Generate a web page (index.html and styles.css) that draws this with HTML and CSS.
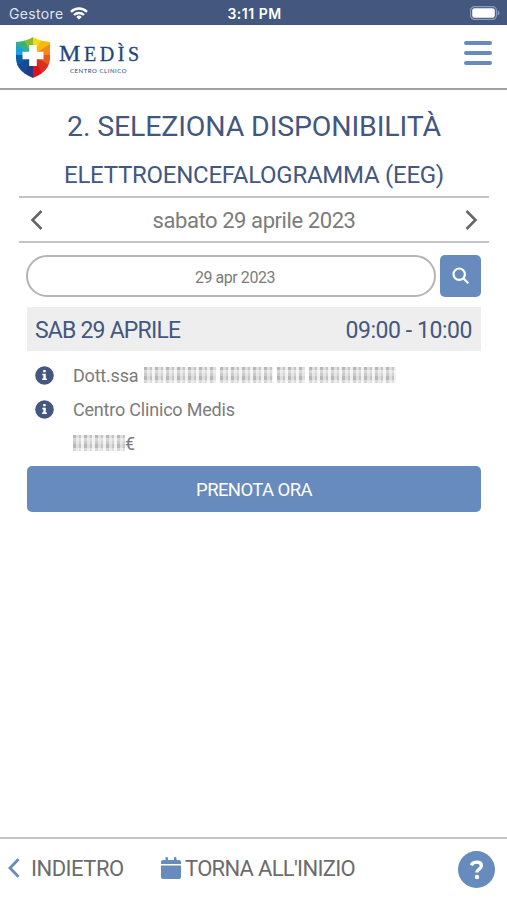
FILE: index.html
```html
<!DOCTYPE html>
<html lang="it">
<head>
    <meta charset="UTF-8">
    <meta name="viewport" content="width=device-width, initial-scale=1.0">
    <title>Medìs - Seleziona disponibilità</title>
    <link rel="stylesheet" href="styles.css">
</head>
<body>
    <div class="status-bar">
        <div class="carrier">
            <span>Gestore</span>
            <svg width="18" height="13" viewBox="0 0 18 13" fill="none" stroke="#fff" stroke-width="2.4">
                <path d="M1 4.8a11.4 11.4 0 0 1 16 0M4 8a7.2 7.2 0 0 1 10 0"/>
                <path d="M9 12.6L6.3 9.9a3.9 3.9 0 0 1 5.4 0z" fill="#fff" stroke="none"/>
            </svg>
        </div>
        <div class="clock">3:11 PM</div>
        <svg class="battery" width="30" height="14" viewBox="0 0 30 14">
            <rect x=".6" y=".6" width="25.8" height="12.8" rx="4" fill="none" stroke="#8d9abb" stroke-width="1.2"/>
            <rect x="2.2" y="2.2" width="22.6" height="9.6" rx="2.4" fill="#fff"/>
            <path d="M27.6 4.6q2 .8 2 2.4t-2 2.4z" fill="#8d9abb"/>
        </svg>
    </div>

    <header class="header">
        <div class="logo">
            <svg width="34" height="41" viewBox="0 0 34 41">
                <defs>
                    <clipPath id="shield"><path d="M17 0Q24 4.500 34 5V21Q34 34 17 41Q0 34 0 21V5Q10 4.500 17 0Z"/></clipPath>
                </defs>
                <g clip-path="url(#shield)">
                    <path d="M17 18V0H34V4z" fill="#f8d90f"/>
                    <path d="M17 18L27 0H34V10z" fill="#f8b80f"/>
                    <path d="M17 18L34 7V19z" fill="#f18a1b"/>
                    <path d="M17 18H34V31z" fill="#e9571d"/>
                    <path d="M17 18L34 29V41H26z" fill="#d8301f"/>
                    <path d="M17 18L28 41H17z" fill="#e2101c"/>
                    <path d="M17 18V41H6z" fill="#273a86"/>
                    <path d="M17 18L8 41H0V28z" fill="#164a93"/>
                    <path d="M17 18L0 30V18z" fill="#075da8"/>
                    <path d="M17 18H0V7z" fill="#1aa1df"/>
                    <path d="M17 18L0 8V0H7z" fill="#38ae83"/>
                    <path d="M17 18L6 0H17z" fill="#86bd2a"/>
                </g>
                <path d="M13.200 8h7.600v6.700h6.700v7.600h-6.700V29h-7.600v-6.700H6.500v-7.600h6.700z" fill="#fff"/>
            </svg>
            <div class="logo-text">
                <div class="logo-name"><span>M</span>EDÌS</div>
                <div class="logo-sub">CENTRO CLINICO</div>
            </div>
        </div>
        <div class="menu">
            <span></span>
            <span></span>
            <span></span>
        </div>
    </header>

    <main class="content">
        <h1>2. SELEZIONA DISPONIBILITÀ</h1>
        <h2>ELETTROENCEFALOGRAMMA (EEG)</h2>

        <div class="day-nav">
            <svg width="14" height="22" viewBox="0 0 14 22"><path d="M11.500 2L2.500 11l9 9"/></svg>
            <span class="day">sabato 29 aprile 2023</span>
            <svg width="14" height="22" viewBox="0 0 14 22"><path d="M2.500 2l9 9-9 9"/></svg>
        </div>

        <div class="search">
            <div class="date-field">29 apr 2023</div>
            <div class="search-button">
                <svg width="18" height="18" viewBox="0 0 18 18" fill="none" stroke="#fff" stroke-width="2.200">
                    <circle cx="7.200" cy="7.200" r="5.700"/>
                    <path d="M11.300 11.300l5 5"/>
                </svg>
            </div>
        </div>

        <div class="slot-header">
            <span class="slot-day">SAB 29 APRILE</span>
            <span class="slot-time">09:00 - 10:00</span>
        </div>

        <div class="slot-row">
            <svg class="info" width="19" height="19" viewBox="0 0 19 19"><circle cx="9.500" cy="9.500" r="9.300"/><path d="M8.200 4h2.500v2.200H8.200zM7.300 7.700h3.500v4.800h1.100v1.600H7.100v-1.600h1.200V9.300h-1z"/></svg>
            <span class="doctor">Dott.ssa</span>
            <span class="masked name">
                <i class="w1"></i><i class="w2"></i><i class="w3"></i><i class="w4"></i>
            </span>
        </div>
        <div class="slot-row">
            <svg class="info" width="19" height="19" viewBox="0 0 19 19"><circle cx="9.500" cy="9.500" r="9.300"/><path d="M8.200 4h2.500v2.200H8.200zM7.300 7.700h3.500v4.800h1.100v1.600H7.100v-1.600h1.200V9.300h-1z"/></svg>
            <span class="clinic">Centro Clinico Medis</span>
        </div>
        <div class="slot-row price">
            <span class="masked"><i class="w5"></i></span><span>€</span>
        </div>

        <div class="book-button">PRENOTA ORA</div>
    </main>

    <footer class="footer">
        <svg class="back-arrow" width="12" height="20" viewBox="0 0 12 20"><path d="M10.500 1.300L2 10l8.500 8.700"/></svg>
        <span class="back">INDIETRO</span>
        <svg class="calendar" width="20" height="22" viewBox="0 0 20 22" fill="#678bbc">
            <path d="M0 7V5q0-2 2-2h2.500V1q0-1 1.200-1T7 1v2h6V1q0-1 1.200-1t1.300 1v2H18q2 0 2 2v2zM0 8.500h20V20q0 2-2 2H2q-2 0-2-2z"/>
        </svg>
        <span class="restart">TORNA ALL'INIZIO</span>
        <div class="help">
            <svg width="14" height="20" viewBox="0 0 14 20" fill="none" stroke="#fff" stroke-width="3.400">
                <path d="M1.300 5.300C2.800 1.200 11.400.9 11.400 5.800c0 3.500-4.500 3-4.500 6.800"/>
                <circle cx="7" cy="17" r="2.200" fill="#fff" stroke="none"/>
            </svg>
        </div>
    </footer>
</body>
</html>
```

FILE: styles.css
```css
* {
    box-sizing: border-box;
}
body {
    margin: 0;
    height: 900px;
    display: flex;
    flex-direction: column;
    font-family: Roboto, "Liberation Sans", sans-serif;
    color: #7c7c7c;
    background-color: #fff;
    overflow: hidden;
    white-space: nowrap;
}
svg {
    display: block;
    flex-shrink: 0;
}
.status-bar {
    height: 25px;
    display: grid;
    grid-template-columns: 1fr auto 1fr;
    align-items: center;
    padding: 1px 7px 0 9px;
    background-color: #43577f;
    color: #fff;
    font-family: Inter, sans-serif;
    font-size: 14px;
}
.carrier {
    display: flex;
    align-items: center;
    gap: 6px;
    color: #dfe4ee;
    letter-spacing: .35px;
}
.clock {
    padding-top: 1px;
    font-size: 14px;
    font-weight: 600;
    letter-spacing: .5px;
}
.battery {
    justify-self: end;
}
.header {
    height: 65px;
    display: flex;
    justify-content: space-between;
    align-items: flex-start;
    padding: 12px 15px 0 16px;
    border-bottom: 2px solid #a0a0a0;
}
.logo {
    display: flex;
    gap: 9px;
}
.logo-text {
    padding-top: 3px;
    color: #1d4679;
}
.logo-name {
    height: 27px;
    line-height: 27px;
    font-family: "Liberation Serif", serif;
    font-size: 20px;
    letter-spacing: 3.600px;
    -webkit-text-stroke: .3px #1d4679;
}
.logo-name span {
    font-size: 24px;
}
.logo-sub {
    padding-left: 11px;
    font-family: Lato, sans-serif;
    font-size: 6px;
    line-height: 7px;
    letter-spacing: .55px;
}
.menu {
    display: flex;
    flex-direction: column;
    gap: 6px;
    padding-top: 4px;
}
.menu span {
    width: 28px;
    height: 4px;
    border-radius: 2px;
    background-color: #678bbc;
}
.content {
    flex: 1;
    padding: 0 18px 0 19px;
}
h1,
h2 {
    margin: 0;
    text-align: center;
    font-weight: 400;
    color: #43577f;
}
h1 {
    padding-top: 18px;
    font-size: 28.500px;
    line-height: 37px;
    letter-spacing: -.15px;
}
h2 {
    padding-top: 14px;
    font-size: 24px;
    line-height: 32px;
    letter-spacing: -.26px;
}
.day-nav {
    height: 47px;
    margin-top: 5px;
    display: flex;
    justify-content: space-between;
    align-items: center;
    padding: 0 11px;
    border-top: 2px solid #c4c4c4;
    border-bottom: 2px solid #c4c4c4;
}
.day-nav path {
    fill: none;
    stroke: #666;
    stroke-width: 2.600;
}
.day {
    padding-top: 2px;
    font-size: 22px;
    letter-spacing: -.42px;
}
.search {
    display: flex;
    gap: 4px;
    padding: 12px 8px 0 7px;
}
.date-field {
    flex: 1;
    height: 42px;
    line-height: 43px;
    padding-left: 8px;
    border: 2px solid #b4b4b4;
    border-radius: 21px;
    text-align: center;
    font-size: 16px;
    line-height: 42px;
    letter-spacing: -.45px;
}
.search-button {
    width: 41px;
    height: 42px;
    display: flex;
    justify-content: center;
    align-items: center;
    border-radius: 5px;
    background-color: #678bbc;
}
.slot-header {
    height: 44px;
    margin: 10px 8px 7px;
    padding: 3px 9px 0 8px;
    display: flex;
    justify-content: space-between;
    align-items: center;
    background-color: #eee;
    color: #43577f;
    font-size: 23px;
}
.slot-day {
    letter-spacing: -.8px;
}
.slot-time {
    letter-spacing: -.45px;
}
.slot-row {
    height: 34px;
    display: flex;
    align-items: center;
    padding-left: 16px;
    font-size: 18px;
    letter-spacing: -.2px;
}
.info {
    margin-right: 19px;
}
.info circle {
    fill: #43577f;
}
.info path {
    fill: #fff;
}
.price {
    padding-left: 54px;
}
.masked {
    display: flex;
    gap: 4px;
}
.masked i {
    height: 16px;
    background:
        repeating-linear-gradient(0deg, rgba(255, 255, 255, .45) 0 3px, transparent 3px 7px, rgba(255, 255, 255, .25) 7px 10px),
        repeating-linear-gradient(90deg, #b8b8b8 0 3px, #dedede 3px 6px, #c4c4c4 6px 8px, #efefef 8px 11px);
}
.name {
    margin-left: 6px;
}
.w1 {
    width: 72px;
}
.w2 {
    width: 53px;
}
.w3 {
    width: 28px;
}
.w4 {
    width: 87px;
}
.w5 {
    width: 52px;
}
.book-button {
    height: 46px;
    line-height: 49px;
    margin: 6px 8px 0;
    border-radius: 5px;
    background-color: #678bbc;
    color: #fff;
    text-align: center;
    font-size: 18.500px;
    letter-spacing: -.6px;
}
.footer {
    height: 63px;
    display: flex;
    align-items: center;
    padding: 0 12px 4px 8px;
    border-top: 2px solid #c4c4c4;
    color: #6c6c6c;
    font-size: 22px;
}
.back-arrow path {
    fill: none;
    stroke: #678bbc;
    stroke-width: 2.800;
}
.back {
    width: 129px;
    padding: 2px 0 0 11px;
    letter-spacing: -.5px;
}
.calendar {
    margin-left: 12px;
}
.restart {
    padding: 2px 0 0 4px;
    letter-spacing: -.7px;
}
.help {
    width: 37px;
    height: 37px;
    margin: 4px 0 0 auto;
    display: flex;
    justify-content: center;
    align-items: center;
    border-radius: 50%;
    background-color: #678bbc;
}
```
